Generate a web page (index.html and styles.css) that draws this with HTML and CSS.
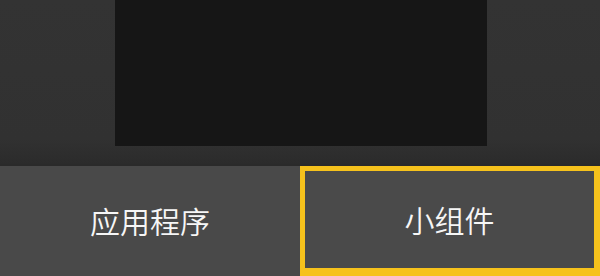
FILE: index.html
```html
<!DOCTYPE html>
<html lang="zh-CN">
<head>
<meta charset="utf-8">
<link rel="stylesheet" href="styles.css">
</head>
<body>
<div class="page">
  <div class="preview">
    <div class="screen"></div>
  </div>
  <div class="tabs">
    <div class="tab">应用程序</div>
    <div class="tab tab-active">小组件</div>
  </div>
</div>
</body>
</html>
```
FILE: styles.css
```css
html, body {
  margin: 0;
  padding: 0;
  background: #484848;
}
.page {
  width: 600px;
  height: 276px;
  display: flex;
  flex-direction: column;
  overflow: hidden;
  font-family: "Noto Sans CJK SC", "Noto Sans", sans-serif;
}
.preview {
  height: 166px;
  flex: none;
  display: flex;
  justify-content: center;
  background: linear-gradient(180deg, #333333 0%, #313131 85%, #2b2b2b 100%);
  box-sizing: border-box;
  border-bottom: 2px solid #2a2a2a;
}
.screen {
  width: 372px;
  height: 146px;
  margin-left: 1px;
  background: #161616;
}
.tabs {
  flex: 1;
  display: flex;
  background: #494949;
}
.tab {
  width: 300px;
  flex: none;
  display: flex;
  align-items: center;
  justify-content: center;
  color: #f6f6f6;
  font-size: 30px;
  font-weight: 350;
  line-height: 1;
  box-sizing: border-box;
  padding-bottom: 2px;
}
.tab-active {
  border-style: solid;
  border-color: #f6c21c;
  border-width: 5px 6px 8px 5px;
  background: #4a4a4a;
}
```
